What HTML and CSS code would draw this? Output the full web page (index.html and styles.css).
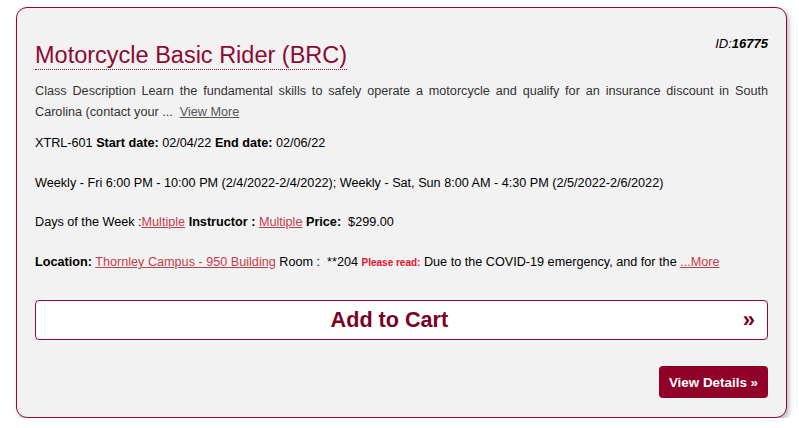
FILE: index.html
```html
<!DOCTYPE html>
<html>
<head>
<meta charset="utf-8">
<link rel="stylesheet" href="styles.css">
</head>
<body>
<div class="card">
  <div class="head">
    <h2 class="title"><a class="title-link">Motorcycle Basic Rider (BRC)</a></h2>
    <div class="course-id"><i>ID:</i><b><i>16775</i></b></div>
  </div>
  <p class="desc">Class Description Learn the fundamental skills to safely operate a motorcycle and qualify for an insurance discount in South Carolina (contact your ...&nbsp; <a class="more">View More</a></p>
  <p class="row">XTRL-601 <b>Start date:</b> 02/04/22 <b>End date:</b> 02/06/22</p>
  <p class="row">Weekly - Fri 6:00 PM - 10:00 PM (2/4/2022-2/4/2022); Weekly - Sat, Sun 8:00 AM - 4:30 PM (2/5/2022-2/6/2022)</p>
  <p class="row">Days of the Week :<a class="link">Multiple</a> <b>Instructor :</b> <a class="link">Multiple</a> <b>Price:</b> &nbsp;$299.00</p>
  <p class="row"><b>Location:</b> <a class="link">Thornley Campus - 950 Building</a> Room : &nbsp;**204 <span class="note">Please read:</span> Due to the COVID-19 emergency, and for the <a class="link">...More</a></p>
  <button class="cart"><span class="cart-label">Add to Cart</span><span class="cart-arrow">»</span></button>
  <div class="actions"><button class="details">View Details »</button></div>
</div>
</body>
</html>
```
FILE: styles.css
```css
html, body {
  margin: 0;
  padding: 0;
  background: #ffffff;
}
body {
  font-family: "Liberation Sans", Arial, sans-serif;
  padding: 7px 11px 0 16px;
}
.card {
  width: 733px;
  background: #f2f2f2;
  border: 1px solid #8e0a33;
  border-radius: 11px;
  padding: 27px 18px 19px 18px;
  box-shadow: 2px 3px 5px rgba(0, 0, 0, 0.28);
}
.head {
  display: flex;
  justify-content: space-between;
  align-items: flex-start;
}
.title {
  margin: 7px 0 0 0;
  font-size: 23.5px;
  font-weight: normal;
  line-height: 27px;
}
.title-link {
  display: inline-block;
  color: #8e0a33;
  border-bottom: 1px dotted #8e0a33;
}
.course-id {
  font-size: 13px;
  line-height: 18px;
  color: #000;
}
.desc {
  margin: 11px 0 0 0;
  font-size: 12.65px;
  line-height: 21px;
  color: #333;
  text-align: justify;
}
.more {
  color: #555;
  text-decoration: underline;
}
.row {
  margin: 10px 0 19.7px 0;
  font-size: 12.65px;
  line-height: 20px;
  color: #000;
}
.row + .row {
  margin-top: 0;
}
.link {
  color: #c23d4b;
  text-decoration: underline;
}
.note {
  color: #e8112d;
  font-weight: bold;
  font-size: 10px;
}
.cart {
  display: flex;
  align-items: center;
  width: 100%;
  height: 40px;
  margin: 27px 0 0 0;
  padding: 0 12px 0 0;
  background: #fff;
  border: 1px solid #8e0a33;
  border-radius: 4px;
  font-family: "Liberation Sans", Arial, sans-serif;
  font-weight: bold;
  color: #7a0026;
}
.cart-label {
  flex: 1;
  text-align: center;
  font-size: 21.6px;
}
.cart-arrow {
  font-size: 22px;
}
.actions {
  display: flex;
  justify-content: flex-end;
  margin-top: 26px;
}
.details {
  height: 32px;
  padding: 0 10px;
  background: #900028;
  color: #fff;
  border: 0;
  border-radius: 4px;
  font-family: "Liberation Sans", Arial, sans-serif;
  font-weight: bold;
  font-size: 13.4px;
}
```
